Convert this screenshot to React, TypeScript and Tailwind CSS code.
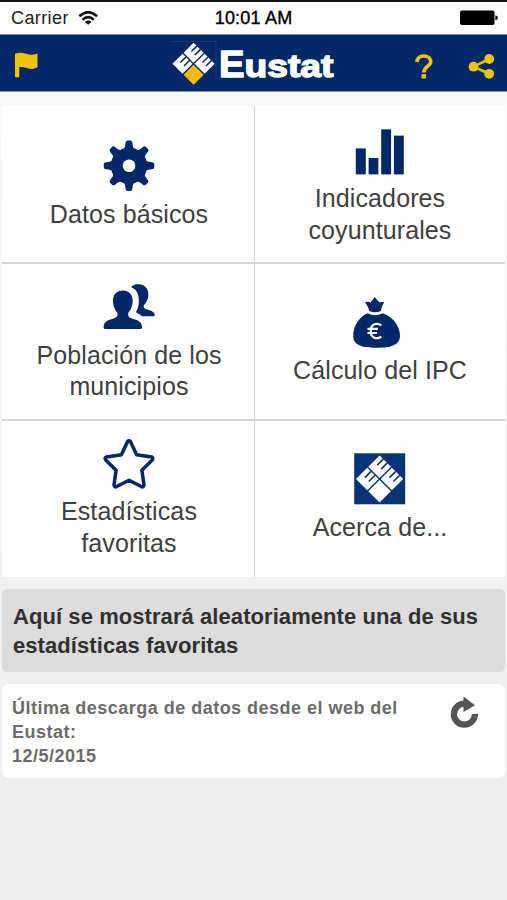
import type { ReactNode } from 'react';

interface Tile {
  id: string;
  lines: string[];
  icon: ReactNode;
}

const NAVY = '#002868';
const teeth = [0, 45, 90, 135, 180, 225, 270, 315];

function EustatMark({ cx, cy, size, accent, navy }: { cx: number; cy: number; size: number; accent: string; navy: string }) {
  return (
    <g transform={`translate(${cx} ${cy}) rotate(45) scale(${size / 30})`}>
      <rect x="-15" y="-15" width="14.3" height="14.3" fill="#fff" />
      <rect x="0.7" y="-15" width="14.3" height="14.3" fill="#fff" />
      <rect x="-15" y="0.7" width="14.3" height="14.3" fill="#fff" />
      <rect x="0.7" y="0.7" width="14.3" height="14.3" fill={accent} />
      <path
        d="M-10.3 -15.2V-7.2M-5.3 -15.2V-7.2M5.4 -15.2V-7.2M10.4 -15.2V-7.2M-10.3 0.5V8.5M-5.3 0.5V8.5"
        stroke={navy}
        strokeWidth="1.5"
        fill="none"
      />
    </g>
  );
}

const tiles: Tile[] = [
  {
    id: 'datos',
    lines: ['Datos básicos'],
    icon: (
      <svg width="54" height="59" viewBox="102 140 54 59" fill={NAVY}>
        <mask id="gear-hole">
          <rect x="100" y="138" width="60" height="60" fill="#fff" />
          <circle cx="129" cy="165.8" r="6.3" fill="#000" />
        </mask>
        <g mask="url(#gear-hole)">
          <circle cx="129" cy="165.8" r="18.2" />
          {teeth.map((angle) => (
            <path
              key={angle}
              d="M122.5 150C125 148.500 125.300 146 125.500 143Q125.700 140.500 127.500 140.500H130.500Q132.300 140.500 132.500 143C132.700 146 133 148.500 135.500 150Z"
              transform={`rotate(${angle} 129 165.8)`}
            />
          ))}
        </g>
      </svg>
    ),
  },
  {
    id: 'indicadores',
    lines: ['Indicadores', 'coyunturales'],
    icon: (
      <svg width="54" height="59" viewBox="353 124 54 59" fill={NAVY}>
        <rect x="355.800" y="148.400" width="10" height="26" />
        <rect x="368.600" y="158" width="9.800" height="16.400" />
        <rect x="381.200" y="129.400" width="9.900" height="45" />
        <rect x="393.900" y="135.600" width="9.900" height="38.800" />
      </svg>
    ),
  },
  {
    id: 'poblacion',
    lines: ['Población de los', 'municipios'],
    icon: (
      <svg width="54" height="59" viewBox="102 281 54 59" fill={NAVY}>
        <path d="M122.800 290.500C116.500 290.500 112.800 295 113 301C113.200 307 115.500 310.500 117.500 313C118 317.500 115 318.200 110.500 319.500C105.500 321 103.600 323.500 103.600 327.500Q103.600 329 105.500 329H140.200Q142 329 142 327.500C142 323.500 140 321 135 319.500C130.500 318.200 127.700 317.500 128.200 313C130.200 310.500 132.500 307 132.700 301C132.900 295 129.100 290.500 122.800 290.500Z" />
        <path d="M131.500 286.500C133.500 284.800 136 284.200 138.500 284.300C144.800 284.400 148.400 288.500 148.300 294.500C148.200 300 146 302.800 143.700 305.500C143.500 309 146 309.200 149 310C153 311.200 154.800 313 154.800 315C154.800 316 154 316.300 153 316.300H142C140.500 315 138.500 313.500 136.700 312.800C135.800 312.400 136.300 311.500 136.800 310.500C138.500 307 139 304 138.800 299C138.600 293.500 136 289 131.500 287.500Z" />
      </svg>
    ),
  },
  {
    id: 'ipc',
    lines: ['Cálculo del IPC'],
    icon: (
      <svg width="54" height="59" viewBox="353 296 54 59" fill={NAVY}>
        <path d="M369.300 311C368.500 307.500 367 305 365 302.200Q368 301.200 370.500 302.500Q371.200 300.500 372.500 300.300Q373.600 298.200 374.800 297Q376 298.200 377.200 300.300Q378.500 300.500 379.300 302.500Q381.500 301.500 384.200 302.300C382.500 305 381.500 307.500 381 311Q375 313.600 369.300 311Z" />
        <path d="M367.700 313.200Q375 317.500 382.500 313.200C391 315.500 400 325 400 335.500C400 344 393.500 347.800 376.500 347.800C359.500 347.800 353.200 344 353.200 335.500C353.200 325 360.500 315.800 367.700 313.200Z" />
        <path d="M381.300 325.200C377 322.500 370.700 323.500 370.700 331C370.700 338.500 377 339.500 381.300 336.800M367.500 328.900H378M367.500 333H377" fill="none" stroke="#fff" strokeWidth="2.200" />
      </svg>
    ),
  },
  {
    id: 'favoritas',
    lines: ['Estadísticas', 'favoritas'],
    icon: (
      <svg width="54" height="59" viewBox="102 437 54 59" fill="none">
        <path
          d="M127.600 441.500Q129 440 130.400 441.500L136.600 454.800L151.500 456.900Q153.800 458 152.300 460L141.900 470.200L144 485Q143.500 487.700 141.300 486.500L129 480.200L116.700 486.500Q114.500 487.700 114 485L116.100 470.200L105.700 460Q104.200 458 106.500 456.900L121.400 454.800Z"
          stroke={NAVY}
          strokeWidth="3.500"
          strokeLinejoin="round"
        />
      </svg>
    ),
  },
  {
    id: 'acerca',
    lines: ['Acerca de...'],
    icon: (
      <svg width="54" height="59" viewBox="353 453 54 59">
        <rect x="354.200" y="453.300" width="51" height="51" fill="#0a3478" />
        <EustatMark cx={379.6} cy={479} size={33.4} accent="#fff" navy="#0a3478" />
      </svg>
    ),
  },
];

function StatusBar() {
  return (
    <div className="grid h-[34px] grid-cols-3 items-center border-t-2 border-[#111] bg-white text-[18px] text-black">
      <div className="flex items-center gap-[9px] pl-[11px] pt-[1px] text-[#222]">
        <span className="tracking-[0.4px]">Carrier</span>
        <svg width="20" height="16" viewBox="78 10 20 16" fill="none" stroke="#111" strokeWidth="2.600">
          <path d="M79.300 15.200Q88.200 7.200 97.100 15.200M82.600 18.700Q88.200 13.700 93.800 18.700" />
          <path d="M88.200 23.800L84.900 20.900Q88.200 18.300 91.500 20.900Z" fill="#111" stroke="none" />
        </svg>
      </div>
      <div className="whitespace-nowrap pt-[1px] text-center tracking-[0.2px] [-webkit-text-stroke:0.4px_#000]">10:01 AM</div>
      <div className="flex justify-end pr-[9px]">
        <svg width="39" height="16" viewBox="0 0 39 16">
          <rect x="1" y="0.500" width="34.500" height="14.500" rx="2" />
          <path d="M36.400 5.200Q39 6 39 7.800Q39 9.600 36.400 10.400Z" />
        </svg>
      </div>
    </div>
  );
}

function Header() {
  return (
    <header className="flex h-[58px] items-center justify-between border-b border-t border-[#8791a3] bg-[#002868]">
      <button type="button" aria-label="Idioma" className="pl-2.5">
        <svg width="32" height="40" viewBox="10 43 32 40" fill="#eec20b">
          <path d="M15 53.800Q19.500 52 24.500 53.200C29 54.500 32 55.800 37.500 53.600V67.200C33 69.800 29 69 25.500 67.800Q22 66.700 19.300 67.300V76.200Q19.300 77.200 18.300 77.200H16Q15 77.200 15 76.200Z" />
        </svg>
      </button>
      <svg className="ml-[50px]" width="168" height="54" viewBox="169 36 168 54" role="img" aria-label="Eustat">
        <path d="M172 41.500H216V82" fill="none" stroke="#17407c" strokeWidth="0.800" />
        <EustatMark cx={193.6} cy={63.8} size={29.8} accent="#fdb913" navy={NAVY} />
        <g fill="#fff" stroke="#fff" strokeWidth="1.300" fontWeight="bold">
          <text x="219" y="76.600" fontSize="36" textLength="25.500" lengthAdjust="spacingAndGlyphs">E</text>
          <text x="244.500" y="76.600" fontSize="31" textLength="89" lengthAdjust="spacingAndGlyphs">ustat</text>
        </g>
      </svg>
      <div className="flex items-center gap-[34px] pr-3">
        <svg width="20" height="40" viewBox="414 43 20 40">
          <path d="M417 62C417.300 57.700 420 56 423.800 56C428 56 430.700 58.300 430.700 61.700C430.700 66.500 423.800 66 423.800 72.500" fill="none" stroke="#eec20b" strokeWidth="3.700" />
          <rect x="421.500" y="74.100" width="4.600" height="4.400" fill="#eec20b" />
        </svg>
        <svg width="27" height="40" viewBox="468 43 27 40" fill="#eec20b" stroke="#eec20b">
          <path d="M489.200 59L473.500 66.700L489.200 73.800" fill="none" strokeWidth="2.600" />
          <circle cx="489.200" cy="59" r="4.900" stroke="none" />
          <circle cx="473.500" cy="66.700" r="4.900" stroke="none" />
          <circle cx="489.200" cy="73.800" r="4.900" stroke="none" />
        </svg>
      </div>
    </header>
  );
}

export default function App() {
  return (
    <div className="flex h-[900px] w-[507px] flex-col overflow-hidden bg-gradient-to-b from-[#fafafa] to-[#ececec] font-['Liberation_Sans',Arial,sans-serif]">
      <StatusBar />
      <Header />

      <main className="flex flex-col px-[2px] pt-[14px]">
        <div className="grid grid-cols-[253px_250px] grid-rows-[158px_157px_156px] overflow-hidden rounded-t-[4px] bg-white">
          {tiles.map((tile) => (
            <button
              key={tile.id}
              type="button"
              className="flex flex-col items-center justify-center border-[#d4d4d4] text-[25px] leading-[31.5px] tracking-[0.1px] text-[#404040] odd:border-r odd:pl-[2px] [&:nth-child(-n+2)]:pt-[2px] [&:nth-child(-n+4)]:border-b-2 [&:nth-child(n+5)]:pb-[2px]"
            >
              {tile.icon}
              {tile.lines.map((line) => (
                <span key={line} className="block whitespace-nowrap">{line}</span>
              ))}
            </button>
          ))}
        </div>

        {/* Random favourite statistic */}
        <div className="mt-3 h-[83px] rounded-[5px] bg-[#dcdcdc] px-[11px] pt-[14px] text-[22px] font-bold leading-[28.5px] text-[#303030]">
          <p className="whitespace-nowrap tracking-[0.07px]">Aquí se mostrará aleatoriamente una de sus</p>
          <p className="tracking-[0.07px]">estadísticas favoritas</p>
        </div>

        {/* Last data download */}
        <div className="mt-3 flex h-[94px] justify-between rounded-[7px] bg-white pl-[10px] pr-[26px] pt-3 text-[18px] font-bold leading-6 tracking-[0.48px] text-[#6b6b6b]">
          <div>
            <p className="whitespace-nowrap">Última descarga de datos desde el web del</p>
            <p>Eustat:</p>
            <p>12/5/2015</p>
          </div>
          <button type="button" aria-label="Actualizar" className="self-start">
            <svg width="30" height="34" viewBox="449 695 30 34">
              <path d="M474.900 712.900A10.500 10.500 0 1 1 464.400 702.700" fill="none" stroke="#555" strokeWidth="6.300" />
              <path d="M463.500 695.500L475 704.200L463.500 711Z" fill="#555" />
            </svg>
          </button>
        </div>
      </main>
    </div>
  );
}
